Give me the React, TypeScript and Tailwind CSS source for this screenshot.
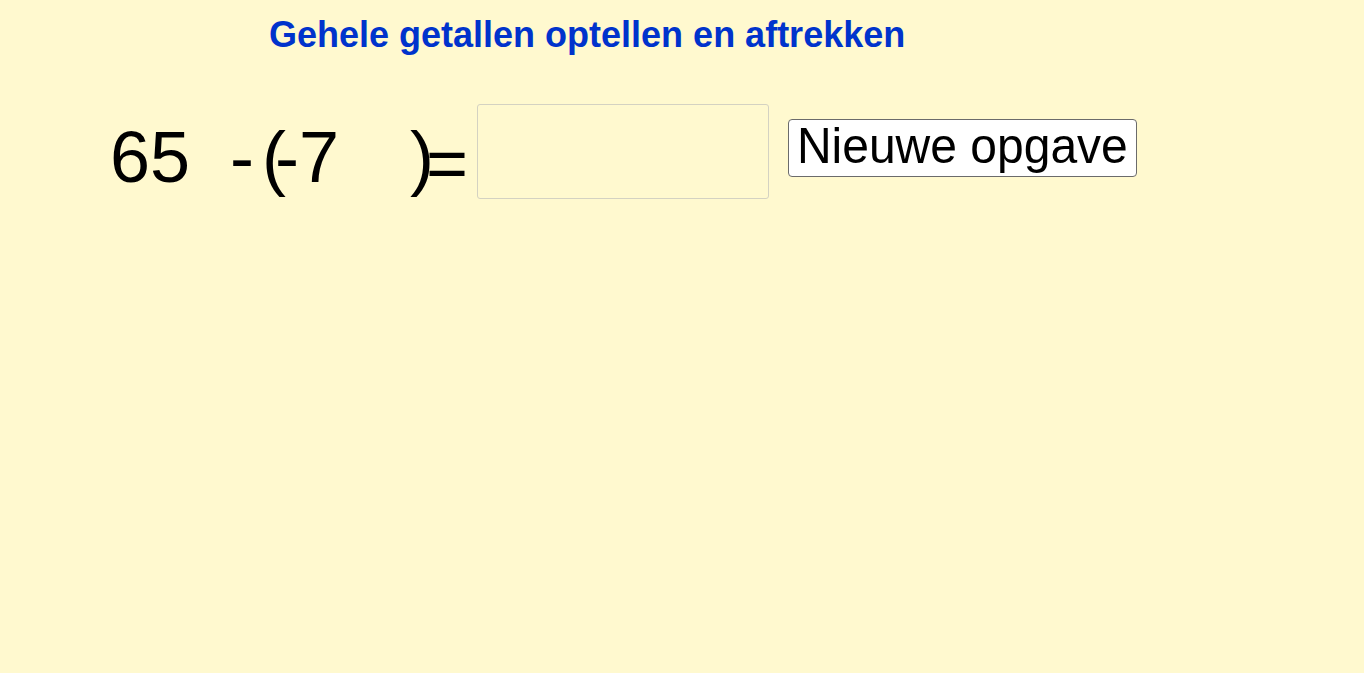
export default function App() {
  return (
    <div className="w-[1366px] h-[675px] bg-white">
      <div className="w-[1364px] h-[673px] bg-[#fff9cf] font-['Liberation_Sans',Arial,sans-serif] text-black pt-[17px] flex flex-col">
        <h1 className="ml-[269px] text-[36px] font-bold leading-none text-[#0033cc] whitespace-nowrap">
          Gehele getallen optellen en aftrekken
        </h1>
        <div className="mt-[51px] ml-[110px] flex items-start">
          {/* GeoGebra-style expression: separate text objects placed freely on the canvas, overlapping */}
          <div className="relative w-[367px] h-[95px] text-[72px] leading-none">
            <span className="absolute left-0 top-[17px]">65</span>
            <span className="absolute left-[120px] top-[17px]">-</span>
            <span className="absolute left-[152px] top-[17px]">(</span>
            <span className="absolute left-[165px] top-[17px]">-7</span>
            <span className="absolute left-[300px] top-[17px]">)</span>
            <span className="absolute left-[316px] top-[23px]">=</span>
          </div>
          <input
            type="text"
            aria-label="antwoord"
            className="w-[292px] h-[95px] rounded-[3px] border border-[#d4d2c2] bg-[#fff9cf] outline-none"
          />
          <button
            type="button"
            className="ml-[19px] mt-[15px] w-[349px] h-[58px] rounded-[4px] border border-[#6b6b6b] bg-white pb-1 text-[50px] leading-none text-black flex items-center justify-center whitespace-nowrap"
          >
            <span className="inline-block scale-x-[0.96]">Nieuwe opgave</span>
          </button>
        </div>
      </div>
    </div>
  );
}
